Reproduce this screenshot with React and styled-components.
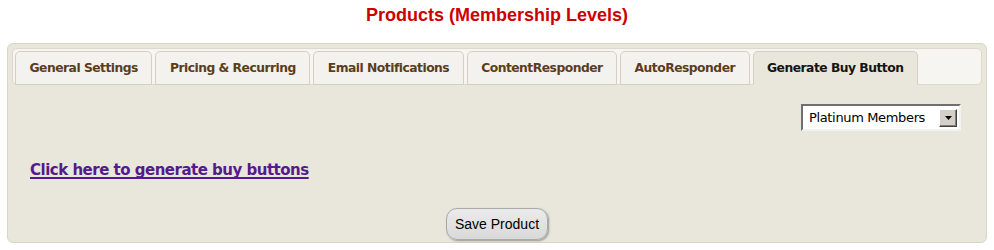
import React from "react";
import styled, { createGlobalStyle } from "styled-components";

const GlobalStyle = createGlobalStyle`
  html, body { margin: 0; padding: 0; background: #ffffff; }
  body { font-family: "DejaVu Sans", Verdana, sans-serif; }
`;

const Page = styled.div`
  width: 994px;
  height: 250px;
  box-sizing: border-box;
  padding: 0 7px;
`;

const Title = styled.h1`
  margin: 0;
  padding-top: 5px;
  height: 43px;
  box-sizing: border-box;
  text-align: center;
  font-family: "Liberation Sans", Arial, sans-serif;
  font-weight: bold;
  font-size: 18px;
  line-height: 21px;
  color: #cc0000;
`;

const Panel = styled.div`
  box-sizing: border-box;
  height: 200px;
  border: 1px solid #d9d6c8;
  border-radius: 6px;
  background: #e9e6dc;
  padding: 4px 4px 2px 4px;
  display: flex;
  flex-direction: column;
`;

const TabBar = styled.div`
  display: flex;
  align-items: flex-end;
  gap: 3px;
  height: 37px;
  box-sizing: border-box;
  padding: 2px 2px 0 2px;
  background: #f6f5f1;
  border: 1px solid #dcd9cd;
  border-radius: 5px;
`;

const Tab = styled.div`
  box-sizing: border-box;
  height: 34px;
  margin-bottom: -1px;
  padding: 0 ${(p) => p.$pad}px;
  display: flex;
  align-items: center;
  border: 1px solid #d3d0c3;
  border-bottom-color: ${(p) => (p.$active ? "#e9e6dc" : "#d3d0c3")};
  border-radius: 5px 5px 0 0;
  background: ${(p) => (p.$active ? "#e9e6dc" : "#f3f2ee")};
  color: ${(p) => (p.$active ? "#141414" : "#5b3d1c")};
  font-family: "DejaVu Sans", Verdana, sans-serif;
  font-weight: bold;
  font-size: 12.3px;
  letter-spacing: -0.5px;
  white-space: nowrap;
  cursor: pointer;
`;

const Content = styled.div`
  flex: 1;
  display: flex;
  flex-direction: column;
  padding: 19px 21px 0 18px;
`;

const SelectRow = styled.div`
  display: flex;
  justify-content: flex-end;
`;

const SelectBox = styled.div`
  box-sizing: border-box;
  width: 160px;
  height: 27px;
  display: flex;
  align-items: center;
  background: #ffffff;
  border: 2px solid;
  border-color: #6f6f6f #f2f2f2 #f2f2f2 #6f6f6f;
  padding: 0 2px 0 6px;
`;

const SelectText = styled.span`
  flex: 1;
  font-family: "DejaVu Sans", Verdana, sans-serif;
  font-size: 13px;
  letter-spacing: -0.35px;
  color: #000;
  white-space: nowrap;
`;

const ArrowButton = styled.span`
  box-sizing: border-box;
  width: 18px;
  height: 18px;
  display: flex;
  align-items: center;
  justify-content: center;
  background: #d4d0c8;
  border: 1px solid;
  border-color: #ffffff #404040 #404040 #ffffff;
  box-shadow: inset -1px -1px 0 #808080;
`;

const LinkRow = styled.div`
  margin-top: 29px;
`;

const BuyLink = styled.a`
  font-family: "DejaVu Sans", Verdana, sans-serif;
  font-weight: bold;
  font-size: 15px;
  line-height: 18px;
  letter-spacing: -0.5px;
  color: #551a8b;
  text-decoration: underline;
  text-decoration-thickness: 2px;
  text-underline-offset: 2px;
  text-decoration-skip-ink: none;
  cursor: pointer;
`;

const ButtonRow = styled.div`
  margin-top: auto;
  display: flex;
  justify-content: center;
  padding-left: 3px;
`;

const SaveButton = styled.button`
  box-sizing: border-box;
  height: 32px;
  padding: 0 8px;
  border: 1px solid #a9a9a9;
  border-radius: 11px;
  background: linear-gradient(#ebebeb, #d9d9d9);
  box-shadow: 1px 1px 2px rgba(0, 0, 0, 0.35);
  font-family: "Liberation Sans", Arial, sans-serif;
  font-size: 14px;
  color: #000;
  cursor: pointer;
`;

const tabs = [
  { label: "General Settings" },
  { label: "Pricing & Recurring" },
  { label: "Email Notifications" },
  { label: "ContentResponder" },
  { label: "AutoResponder" },
  { label: "Generate Buy Button", active: true },
];

export default function App() {
  return (
    <>
      <GlobalStyle />
      <Page>
        <Title>Products (Membership Levels)</Title>
        <Panel>
          <TabBar>
            {tabs.map((t) => (
              <Tab key={t.label} $active={t.active} $pad={13.5}>
                {t.label}
              </Tab>
            ))}
          </TabBar>
          <Content>
            <SelectRow>
              <SelectBox>
                <SelectText>Platinum Members</SelectText>
                <ArrowButton>
                  <svg width="7" height="4" viewBox="0 0 7 4">
                    <polygon points="0,0 7,0 3.5,4" fill="#000" />
                  </svg>
                </ArrowButton>
              </SelectBox>
            </SelectRow>
            <LinkRow>
              <BuyLink>Click here to generate buy buttons</BuyLink>
            </LinkRow>
            <ButtonRow>
              <SaveButton>Save Product</SaveButton>
            </ButtonRow>
          </Content>
        </Panel>
      </Page>
    </>
  );
}
